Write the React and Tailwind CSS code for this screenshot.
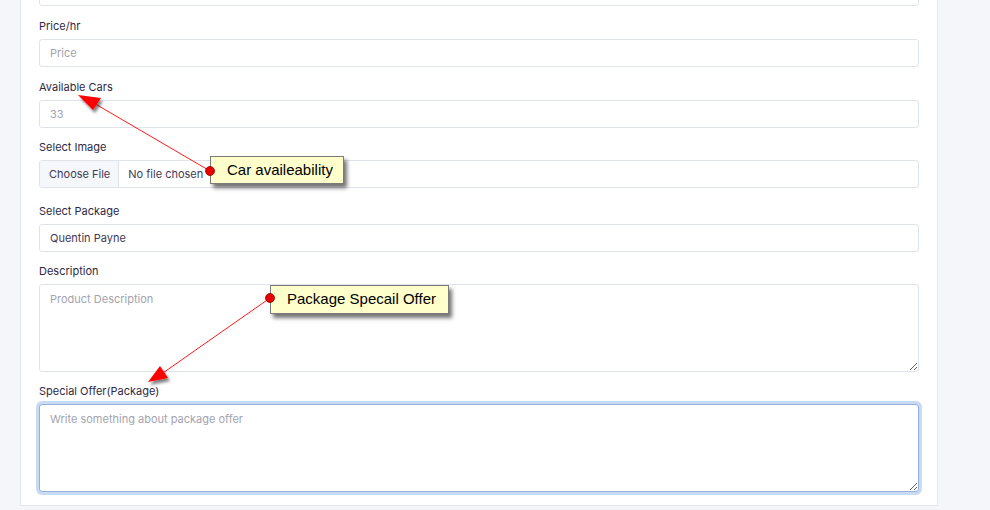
import React from "react";

const font = { fontFamily: '"Inter", "Noto Sans", sans-serif' };

function Label({ children }) {
  return <label className="block text-[11px] leading-[16px] text-[#2d2a45] mb-[5px]">{children}</label>;
}

function Field({ label, placeholder, value, className = "" }) {
  return (
    <div className={className}>
      <Label>{label}</Label>
      <input
        readOnly
        value={value ?? ""}
        placeholder={placeholder}
        className="block w-full h-[28px] rounded-[3px] border border-[#dfe3ea] bg-white px-[10px] text-[11px] text-[#3d3a55] placeholder:text-[#a3a3ad] outline-none"
      />
    </div>
  );
}

function Callout({ text, className }) {
  return (
    <div className={`absolute bg-[#ffffcc] border border-[#7a7a7a] shadow-[3px_4px_4px_rgba(0,0,0,0.55)] text-[15px] leading-[26px] text-black pl-[16px] ${className}`} style={{ fontFamily: '"Liberation Sans", Arial, sans-serif' }}>
      {text}
    </div>
  );
}

export default function App() {
  return (
    <div className="relative w-[990px] h-[510px] overflow-hidden bg-[#f5f6fa] flex" style={font}>
      <div className="w-[20px] shrink-0" />
      <div className="w-[918px] shrink-0 bg-white border-x border-b border-[#e3e6ee] h-[506px] px-[18px]">
        <div className="mt-[-22px]">
          <input readOnly className="block w-full h-[28px] rounded-[3px] border border-[#dfe3ea] bg-white" />
          <Field className="mt-[12px]" label="Price/hr" placeholder="Price" />
          <Field className="mt-[12px]" label="Available Cars" placeholder="33" />
          <div className="mt-[11px]">
            <Label>Select Image</Label>
            <div className="flex h-[28px] rounded-[3px] border border-[#dfe3ea] bg-white text-[11px] overflow-hidden">
              <span className="flex items-center pl-[9px] pr-[8px] bg-[#f5f7fb] border-r border-[#dfe3ea] text-[#3d3a55]">Choose File</span>
              <span className="flex items-center pl-[9px] text-[#3d3a55]">No file chosen</span>
            </div>
          </div>
          <Field className="mt-[15px]" label="Select Package" value="Quentin Payne" />
          <div className="mt-[11px]">
            <Label>Description</Label>
            <textarea
              readOnly
              placeholder="Product Description"
              className="block w-full h-[88px] rounded-[3px] border border-[#dfe3ea] bg-white px-[10px] py-[6px] text-[11px] placeholder:text-[#a3a3ad] outline-none resize-y"
            />
          </div>
          <div className="mt-[11px]">
            <Label>Special Offer(Package)</Label>
            <textarea
              readOnly
              placeholder="Write something about package offer"
              className="block w-full h-[88px] rounded-[3px] border border-[#93b1e0] ring-[3px] ring-[#c9dbf3] bg-white px-[10px] py-[6px] text-[11px] placeholder:text-[#a3a3ad] outline-none resize-y"
            />
          </div>
        </div>
      </div>
      <div className="flex-1" />

      <svg className="absolute inset-0 pointer-events-none" width="990" height="510">
        <defs>
          <filter id="sh" x="-50%" y="-50%" width="200%" height="200%">
            <feDropShadow dx="2" dy="3" stdDeviation="1.5" floodColor="#000" floodOpacity="0.5" />
          </filter>
        </defs>
        <line x1="210" y1="171" x2="92" y2="102" stroke="#ff1a1a" strokeWidth="1" />
        <polygon points="78,95 101,98 93,110" fill="#ff0000" filter="url(#sh)" />
        <line x1="270" y1="298" x2="160" y2="375" stroke="#ff1a1a" strokeWidth="1" />
        <polygon points="148,382 160,366 168,378" fill="#ff0000" filter="url(#sh)" />
      </svg>
      <Callout text="Car availeability" className="left-[210px] top-[156px] w-[134px] h-[28px]" />
      <Callout text="Package Specail Offer" className="left-[270px] top-[285px] w-[179px] h-[29px]" />
      <svg className="absolute inset-0 pointer-events-none" width="990" height="510">
        <circle cx="210" cy="171" r="4.5" fill="#e60000" stroke="#990000" strokeWidth="0.8" />
        <circle cx="270" cy="298" r="4.5" fill="#e60000" stroke="#990000" strokeWidth="0.8" />
      </svg>
    </div>
  );
}
